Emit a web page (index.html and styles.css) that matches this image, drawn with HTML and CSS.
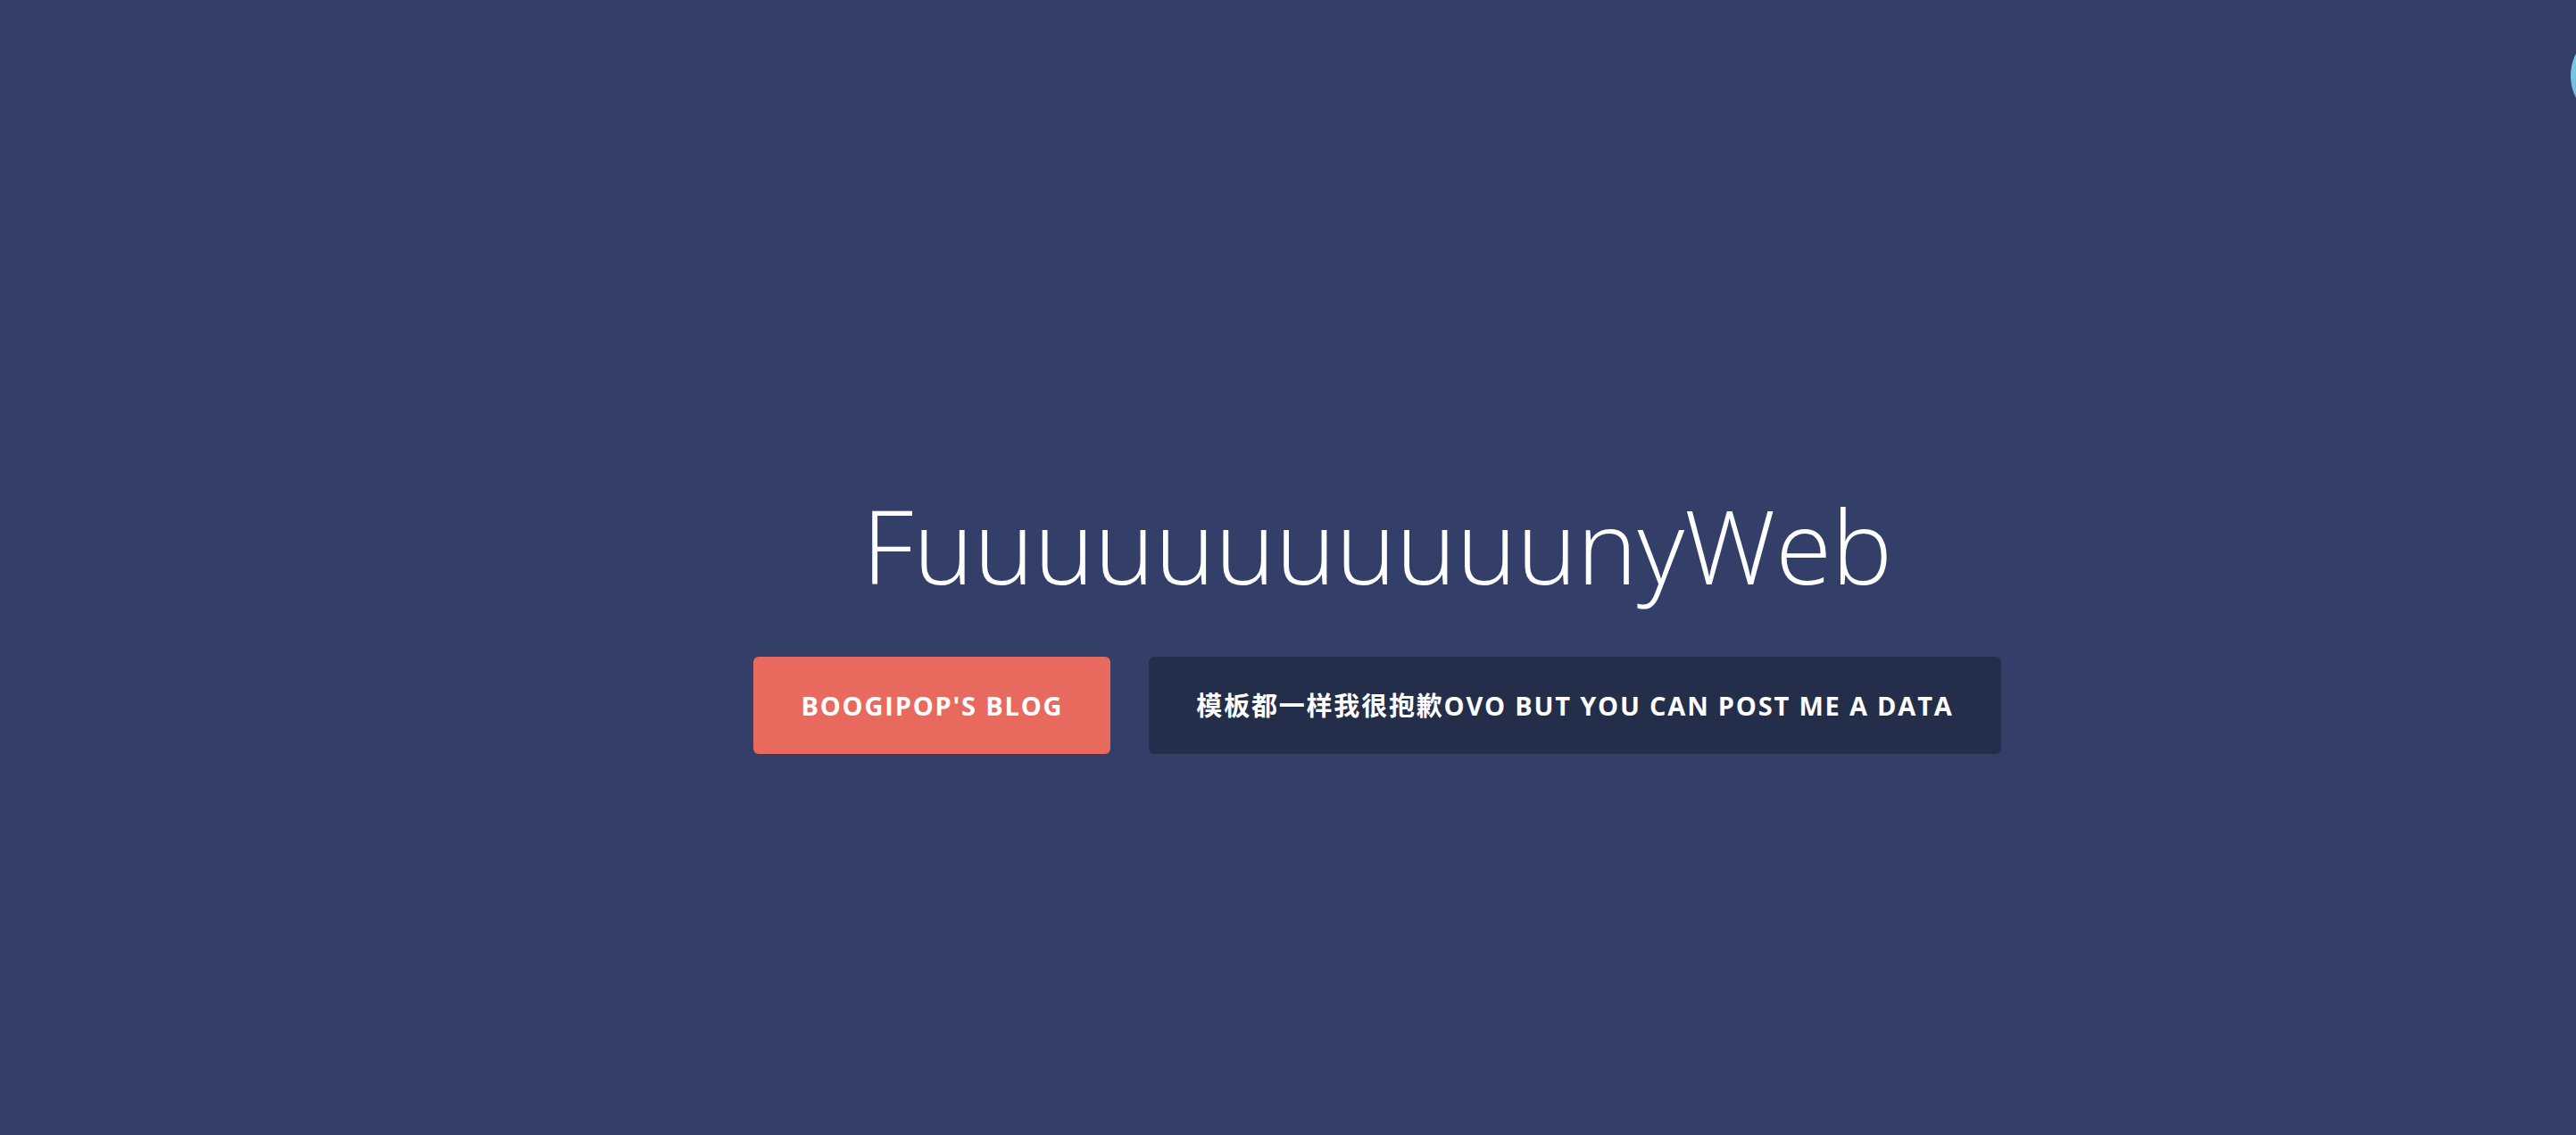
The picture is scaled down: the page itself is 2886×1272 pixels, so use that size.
FILE: index.html
```html
<!DOCTYPE html>
<html lang="zh">
<head>
<meta charset="utf-8">
<title>FuuuuuuuuuuunyWeb</title>
<link rel="stylesheet" href="styles.css">
</head>
<body>
<main class="hero">
  <h1 class="hero-title">FuuuuuuuuuuunyWeb</h1>
  <div class="hero-actions">
    <a class="btn btn-coral" href="#">Boogipop's Blog</a>
    <a class="btn btn-dark" href="#">模板都一样我很抱歉OVO but you can post me a data</a>
  </div>
</main>
<div class="orb"></div>
</body>
</html>
```

FILE: styles.css
```css
html, body {
  margin: 0;
  padding: 0;
  height: 100%;
  overflow: hidden;
}
body {
  background: #333f68;
  font-family: "Open Sans", "Noto Sans CJK SC", sans-serif;
  color: #fff;
}
.hero {
  box-sizing: border-box;
  height: 1272px;
  padding: 542px 0 0 200px;
  display: flex;
  flex-direction: column;
  align-items: center;
}
.hero-title {
  margin: 0;
  font-weight: 300;
  font-size: 114.5px;
  line-height: 139px;
  letter-spacing: 0;
  color: #fff;
}
.hero-actions {
  margin-top: 55px;
  display: flex;
  gap: 43px;
}
.btn {
  display: block;
  padding: 40px 53px;
  font-size: 29px;
  line-height: 29px;
  font-weight: 700;
  text-transform: uppercase;
  letter-spacing: 1.8px;
  color: #fff;
  text-decoration: none;
  border-radius: 6px;
  white-space: nowrap;
}
.btn-coral {
  background: #e8695e;
}
.btn-dark {
  background: #232e4a;
}
.orb {
  position: absolute;
  top: 30px;
  left: 2880px;
  width: 110px;
  height: 110px;
  border-radius: 50%;
  background: linear-gradient(180deg, #80d0e6, #6eb6df);
}
```
